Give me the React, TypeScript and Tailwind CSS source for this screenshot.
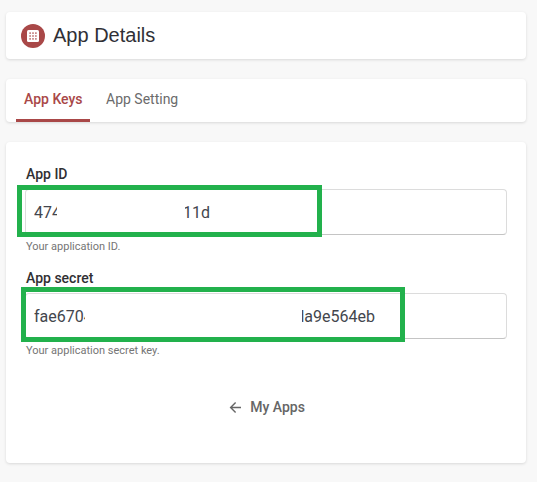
import React from "react";

const card = "rounded-[4px] bg-white shadow-[0_1px_3px_rgba(0,0,0,0.13)]";

function GridIcon() {
  return (
    <span className="flex h-6 w-6 items-center justify-center rounded-full bg-[#a94848]">
      <svg width="12" height="12" viewBox="0 0 12 12">
        <rect width="12" height="12" rx="1.5" fill="#fff" />
        {[2.4, 5.3, 8.2].map((y) =>
          [2.4, 5.3, 8.2].map((x) => (
            <rect key={`${x}-${y}`} x={x} y={y} width="1.4" height="1.4" fill="#a94848" />
          )),
        )}
      </svg>
    </span>
  );
}

interface FieldProps {
  label: string;
  hint: string;
  children: React.ReactNode;
}

function Field({ label, hint, children }: FieldProps) {
  return (
    <div className="h-[104px]">
      <div className="h-[25px] pl-px text-[14px] leading-[20px] font-medium text-[#303033]">{label}</div>
      <div className="relative flex h-[46px] items-center rounded-[4px] border border-[#dcdcdc] border-b-[#c4c4c4] pt-0.5 pl-2 text-[16px] leading-[24px] text-[#43464d]">
        {children}
      </div>
      <div className="pt-1 pl-px text-[11px] leading-[16px] text-[#757575]">{hint}</div>
    </div>
  );
}

export default function App() {
  return (
    <div className="flex h-[482px] w-[542px] bg-white font-[Roboto,sans-serif]">
      <div className="flex h-full w-[537px] flex-col gap-5 bg-[#f8f8f8] pt-3 pr-[11px] pl-1.5">
        <header className={`${card} flex h-[47px] items-center gap-2 pl-[15px]`}>
          <GridIcon />
          <h1 className="pb-0.5 font-['Liberation_Sans',sans-serif] text-[20px] leading-[24px] text-[#303036]">App Details</h1>
        </header>
        <nav className={`${card} flex h-[43px] pl-2.5 text-[14px] leading-[20px]`}>
          <a className="h-[43px] w-[74px] border-b-[3px] border-[#a94848] pt-[10px] pl-2 font-medium whitespace-nowrap text-[#a94848]">App Keys</a>
          <a className="px-4 pt-[10px] text-[#6b6b6b]">App Setting</a>
        </nav>
        <main className={`${card} h-[321px] px-[19px] pt-[22px]`}>
          <Field label="App ID" hint="Your application ID.">
            <span className="w-[23px] overflow-hidden">474</span>
            <span className="ml-[128px] flex w-[25px] justify-end overflow-hidden whitespace-nowrap">11d</span>
            <span className="absolute top-[-5px] left-[-9px] h-[52px] w-[305px] border-[5px] border-[#22b14c]" />
          </Field>
          <Field label="App secret" hint="Your application secret key.">
            <span className="w-[51px] overflow-hidden">fae6704</span>
            <span className="ml-[217px] flex w-[73px] justify-end overflow-hidden whitespace-nowrap">da9e564eb</span>
            <span className="absolute top-[-7px] left-[-5px] h-[55px] w-[384px] border-[5px] border-[#22b14c]" />
          </Field>
          <div className="mt-[25px] flex items-center justify-center gap-2 pl-0.5 text-[14px] leading-[20px] font-medium text-[#666]">
            <svg width="13" height="14" viewBox="0 0 13 14" fill="none" stroke="#666" strokeWidth="1.4">
              <path d="M12 7.5H1.8M6.6 2.5L1.6 7.5L6.6 12.5" />
            </svg>
            My Apps
          </div>
        </main>
      </div>
    </div>
  );
}
